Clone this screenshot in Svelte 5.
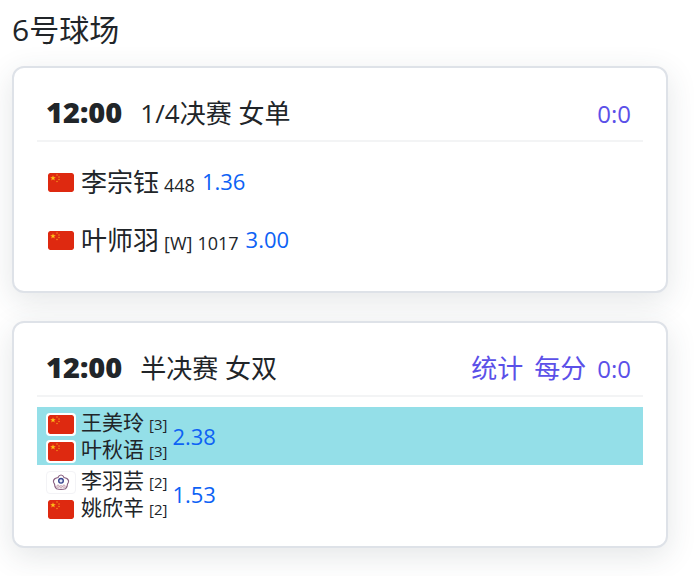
<script lang="ts">
    type Player = { flag: 'cn' | 'tpe'; name: string; notes: string[] };
    type Side = { players: Player[]; odds: string; serving?: boolean };
    type Match = { time: string; round: string; links: string[]; score: string; sides: Side[] };

    const court = '6号球场';

    const matches: Match[] = [
        {
            time: '12:00',
            round: '1/4决赛 女单',
            links: [],
            score: '0:0',
            sides: [
                { players: [{ flag: 'cn', name: '李宗钰', notes: ['448'] }], odds: '1.36' },
                { players: [{ flag: 'cn', name: '叶师羽', notes: ['[W]', '1017'] }], odds: '3.00' }
            ]
        },
        {
            time: '12:00',
            round: '半决赛 女双',
            links: ['统计', '每分'],
            score: '0:0',
            sides: [
                {
                    players: [
                        { flag: 'cn', name: '王美玲', notes: ['[3]'] },
                        { flag: 'cn', name: '叶秋语', notes: ['[3]'] }
                    ],
                    odds: '2.38',
                    serving: true
                },
                {
                    players: [
                        { flag: 'tpe', name: '李羽芸', notes: ['[2]'] },
                        { flag: 'cn', name: '姚欣辛', notes: ['[2]'] }
                    ],
                    odds: '1.53'
                }
            ]
        }
    ];
</script>

{#snippet flagIcon(code: string)}
    {#if code === 'cn'}
        <svg class="flag" viewBox="0 0 26 19" role="img" aria-label="CHN">
            <rect width="26" height="19" rx="2" fill="#de2910" />
            <path fill="#ffc21a" d="M5 2.2l.7 2h2.1L6.1 5.5l.7 2L5 6.3l-1.8 1.2.7-2-1.7-1.3h2.1z" />
            <g fill="#f5a11c">
                <circle cx="9" cy="2" r=".7" />
                <circle cx="11" cy="4" r=".7" />
                <circle cx="11" cy="6.5" r=".7" />
                <circle cx="9" cy="8.5" r=".7" />
            </g>
        </svg>
    {:else}
        <svg class="flag tpe" viewBox="0 0 26 19" role="img" aria-label="TPE">
            <path
                fill="#fff"
                stroke="#8b6282"
                stroke-width="1.2"
                stroke-linejoin="round"
                d="M10 4.500Q11 2 13 2Q15 2 16 4.500Q19.500 5 20.500 7.500Q21 9.500 19.500 11Q19.500 14 17.500 15.800Q15.500 16.500 13 16.500Q10.500 16.500 8.500 15.800Q6.500 14 6.500 11Q5 9.500 5.500 7.500Q6.500 5 10 4.500z"
            />
            <circle cx="13" cy="7.8" r="2.3" fill="#e3e8f7" stroke="#38458f" stroke-width="1.4" />
            <g fill="none" stroke="#a2667f" stroke-width=".6">
                <circle cx="10" cy="13.2" r="1.2" />
                <circle cx="13" cy="13.8" r="1.2" />
                <circle cx="16" cy="13.2" r="1.2" />
            </g>
        </svg>
    {/if}
{/snippet}

<main>
    <h1>{court}</h1>
    {#each matches as match}
        <article class="match">
            <header>
                <time>{match.time}</time>
                <h2>{match.round}</h2>
                <nav>
                    {#each match.links as link}
                        <a href="#match">{link}</a>
                    {/each}
                    <a class="score" href="#match">{match.score}</a>
                </nav>
            </header>
            {#each match.sides as side}
                <div class="side" class:doubles={side.players.length > 1} class:serving={side.serving}>
                    <div class="players">
                        {#each side.players as player}
                            <div class="player">
                                {@render flagIcon(player.flag)}
                                <span class="name">{player.name}</span>
                                {#each player.notes as note}
                                    <small>{note}</small>
                                {/each}
                            </div>
                        {/each}
                    </div>
                    <span class="odds">{side.odds}</span>
                </div>
            {/each}
        </article>
    {/each}
</main>

<style>
    :global(body) {
        background: #fff;
        color: #212529;
        font-family: "Open Sans", "Noto Sans CJK SC", sans-serif;
    }

    main {
        padding: 12px 26px 28px 12px;
    }

    h1 {
        margin: 0 0 18px;
        font-size: 30px;
        font-weight: 400;
        line-height: 36px;
    }

    .match {
        padding: 23px;
        border: 2px solid #dee2e8;
        border-radius: 12px;
        background: #fff;
        box-shadow: 0 8px 30px rgba(50, 60, 70, 0.13);
    }

    .match + .match {
        margin-top: 28px;
    }

    header {
        display: flex;
        align-items: baseline;
        gap: 18px;
        margin-bottom: 10px;
        padding: 0 12px 6px 9px;
        border-bottom: 2px solid #f3f4f5;
        font-size: 26px;
        line-height: 41px;
    }

    time {
        font-size: 29px;
        font-weight: 800;
    }

    h2 {
        margin: 0;
        font-size: 26px;
        font-weight: 400;
    }

    nav {
        display: flex;
        align-items: baseline;
        gap: 11px;
        margin-left: auto;
    }

    nav a {
        color: #5b50e8;
        text-decoration: none;
    }

    .score {
        font-size: 24px;
    }

    .side {
        display: flex;
        align-items: center;
        gap: 7px;
        height: 58px;
        padding: 0 9px;
    }

    .serving {
        background: #94dfe8;
    }

    .players {
        padding-top: 3px;
    }

    .player {
        display: flex;
        align-items: baseline;
        gap: 5px;
        height: 38px;
        font-size: 26px;
        line-height: 36px;
    }

    .flag {
        align-self: center;
        box-sizing: border-box;
        width: 30px;
        height: 23px;
        border: 2px solid #fff;
        border-radius: 4px;
        background: #fff;
    }

    .tpe {
        border: 1px solid #f3f3f6;
        padding: 1px;
    }

    small {
        font-size: 18px;
    }

    .doubles {
        gap: 5px;
    }

    .doubles .player {
        height: 27px;
        font-size: 21px;
        line-height: 23px;
    }

    .doubles small {
        font-size: 15px;
    }

    .odds {
        color: #0d62f5;
        font-size: 22px;
        line-height: 30px;
    }
</style>
